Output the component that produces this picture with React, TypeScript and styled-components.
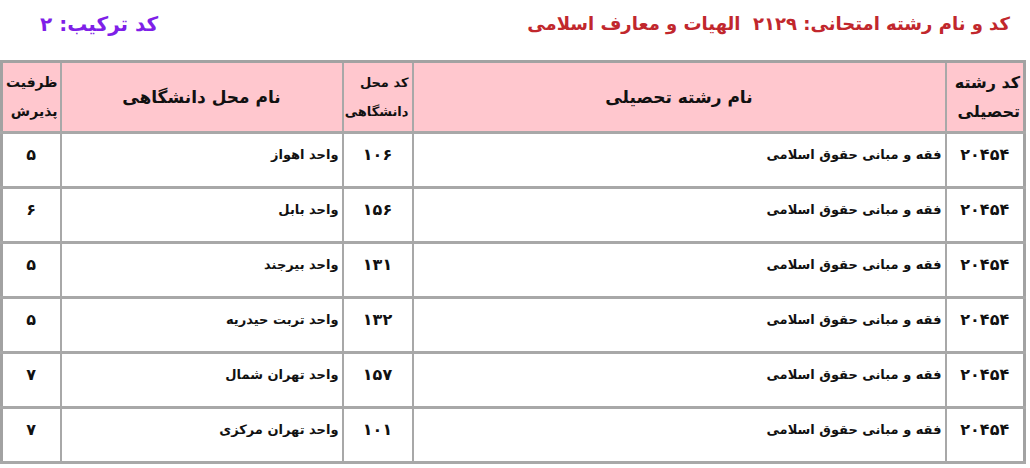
import styled, { createGlobalStyle } from "styled-components";

const GlobalStyle = createGlobalStyle`
  html, body {
    margin: 0;
    padding: 0;
    background: #fff;
  }
  body {
    font-family: "DejaVu Sans", "Noto Sans", sans-serif;
  }
`;

const Page = styled.div`
  direction: rtl;
  width: 1030px;
  height: 468px;
  overflow: hidden;
`;

const TopBar = styled.div`
  display: flex;
  justify-content: space-between;
  align-items: center;
  height: 47px;
  padding: 0 20px 0 40px;
  margin-bottom: 13px;
`;

const Title = styled.h1<{ $color: string; $size: number }>`
  margin: 0;
  font-size: ${({ $size }) => $size}px;
  font-weight: 700;
  color: ${({ $color }) => $color};
  white-space: pre;
`;

const Table = styled.table`
  border-collapse: collapse;
  table-layout: fixed;
  width: 1023px;
  margin-right: 4px;
  border: 3px solid #a2a2a2;
`;

const Col = styled.col<{ $w: number }>`
  width: ${({ $w }) => $w}px;
`;

const HeadCell = styled.th<{ $center?: boolean; $size?: number }>`
  height: 68px;
  background: #ffc7ce;
  border: 2px solid #a8a8a8;
  border-bottom-width: 3px;
  padding: 0 3px;
  font-size: ${({ $size }) => $size ?? 16}px;
  font-weight: 700;
  line-height: 29px;
  color: #111;
  text-align: ${({ $center }) => ($center ? "center" : "right")};
  vertical-align: middle;
  white-space: nowrap;
  overflow: hidden;
`;

const Row = styled.tr`
  height: 55px;
`;

const NumCell = styled.td`
  border: 2px solid #a8a8a8;
  border-bottom-width: 3px;
  padding: 11px 4px 0;
  font-size: 16px;
  font-weight: 700;
  text-align: center;
  vertical-align: top;
  color: #111;
`;

const TextCell = styled.td`
  border: 2px solid #a8a8a8;
  border-bottom-width: 3px;
  padding: 13px 3px 0;
  font-size: 13px;
  font-weight: 700;
  text-align: right;
  vertical-align: top;
  color: #111;
  white-space: nowrap;
`;

const rows = [
  { code: "۲۰۴۵۴", field: "فقه و مبانی حقوق اسلامی", unit: "۱۰۶", place: "واحد اهواز", cap: "۵" },
  { code: "۲۰۴۵۴", field: "فقه و مبانی حقوق اسلامی", unit: "۱۵۶", place: "واحد بابل", cap: "۶" },
  { code: "۲۰۴۵۴", field: "فقه و مبانی حقوق اسلامی", unit: "۱۳۱", place: "واحد بیرجند", cap: "۵" },
  { code: "۲۰۴۵۴", field: "فقه و مبانی حقوق اسلامی", unit: "۱۳۲", place: "واحد تربت حیدریه", cap: "۵" },
  { code: "۲۰۴۵۴", field: "فقه و مبانی حقوق اسلامی", unit: "۱۵۷", place: "واحد تهران شمال", cap: "۷" },
  { code: "۲۰۴۵۴", field: "فقه و مبانی حقوق اسلامی", unit: "۱۰۱", place: "واحد تهران مرکزی", cap: "۷" },
];

const App = () => {
  return (
    <>
      <GlobalStyle />
      <Page>
        <TopBar>
          <Title $color="#c1272d" $size={18}>
            {"کد و نام رشته امتحانی: ۲۱۲۹  الهیات و معارف اسلامی"}
          </Title>
          <Title $color="#7f1fe8" $size={20}>
            کد ترکیب: ۲
          </Title>
        </TopBar>
        <Table>
          <colgroup>
            <Col $w={79} />
            <Col $w={533} />
            <Col $w={70} />
            <Col $w={282} />
            <Col $w={59} />
          </colgroup>
          <thead>
            <tr>
              <HeadCell>
                کد رشته
                <br />
                تحصیلی
              </HeadCell>
              <HeadCell $center $size={17}>
                نام رشته تحصیلی
              </HeadCell>
              <HeadCell $size={13}>
                کد محل
                <br />
                دانشگاهی
              </HeadCell>
              <HeadCell $center $size={17}>
                نام محل دانشگاهی
              </HeadCell>
              <HeadCell $size={14}>
                ظرفیت
                <br />
                پذیرش
              </HeadCell>
            </tr>
          </thead>
          <tbody>
            {rows.map((r, i) => (
              <Row key={i}>
                <NumCell>{r.code}</NumCell>
                <TextCell>{r.field}</TextCell>
                <NumCell>{r.unit}</NumCell>
                <TextCell>{r.place}</TextCell>
                <NumCell>{r.cap}</NumCell>
              </Row>
            ))}
          </tbody>
        </Table>
      </Page>
    </>
  );
};

export default App;
